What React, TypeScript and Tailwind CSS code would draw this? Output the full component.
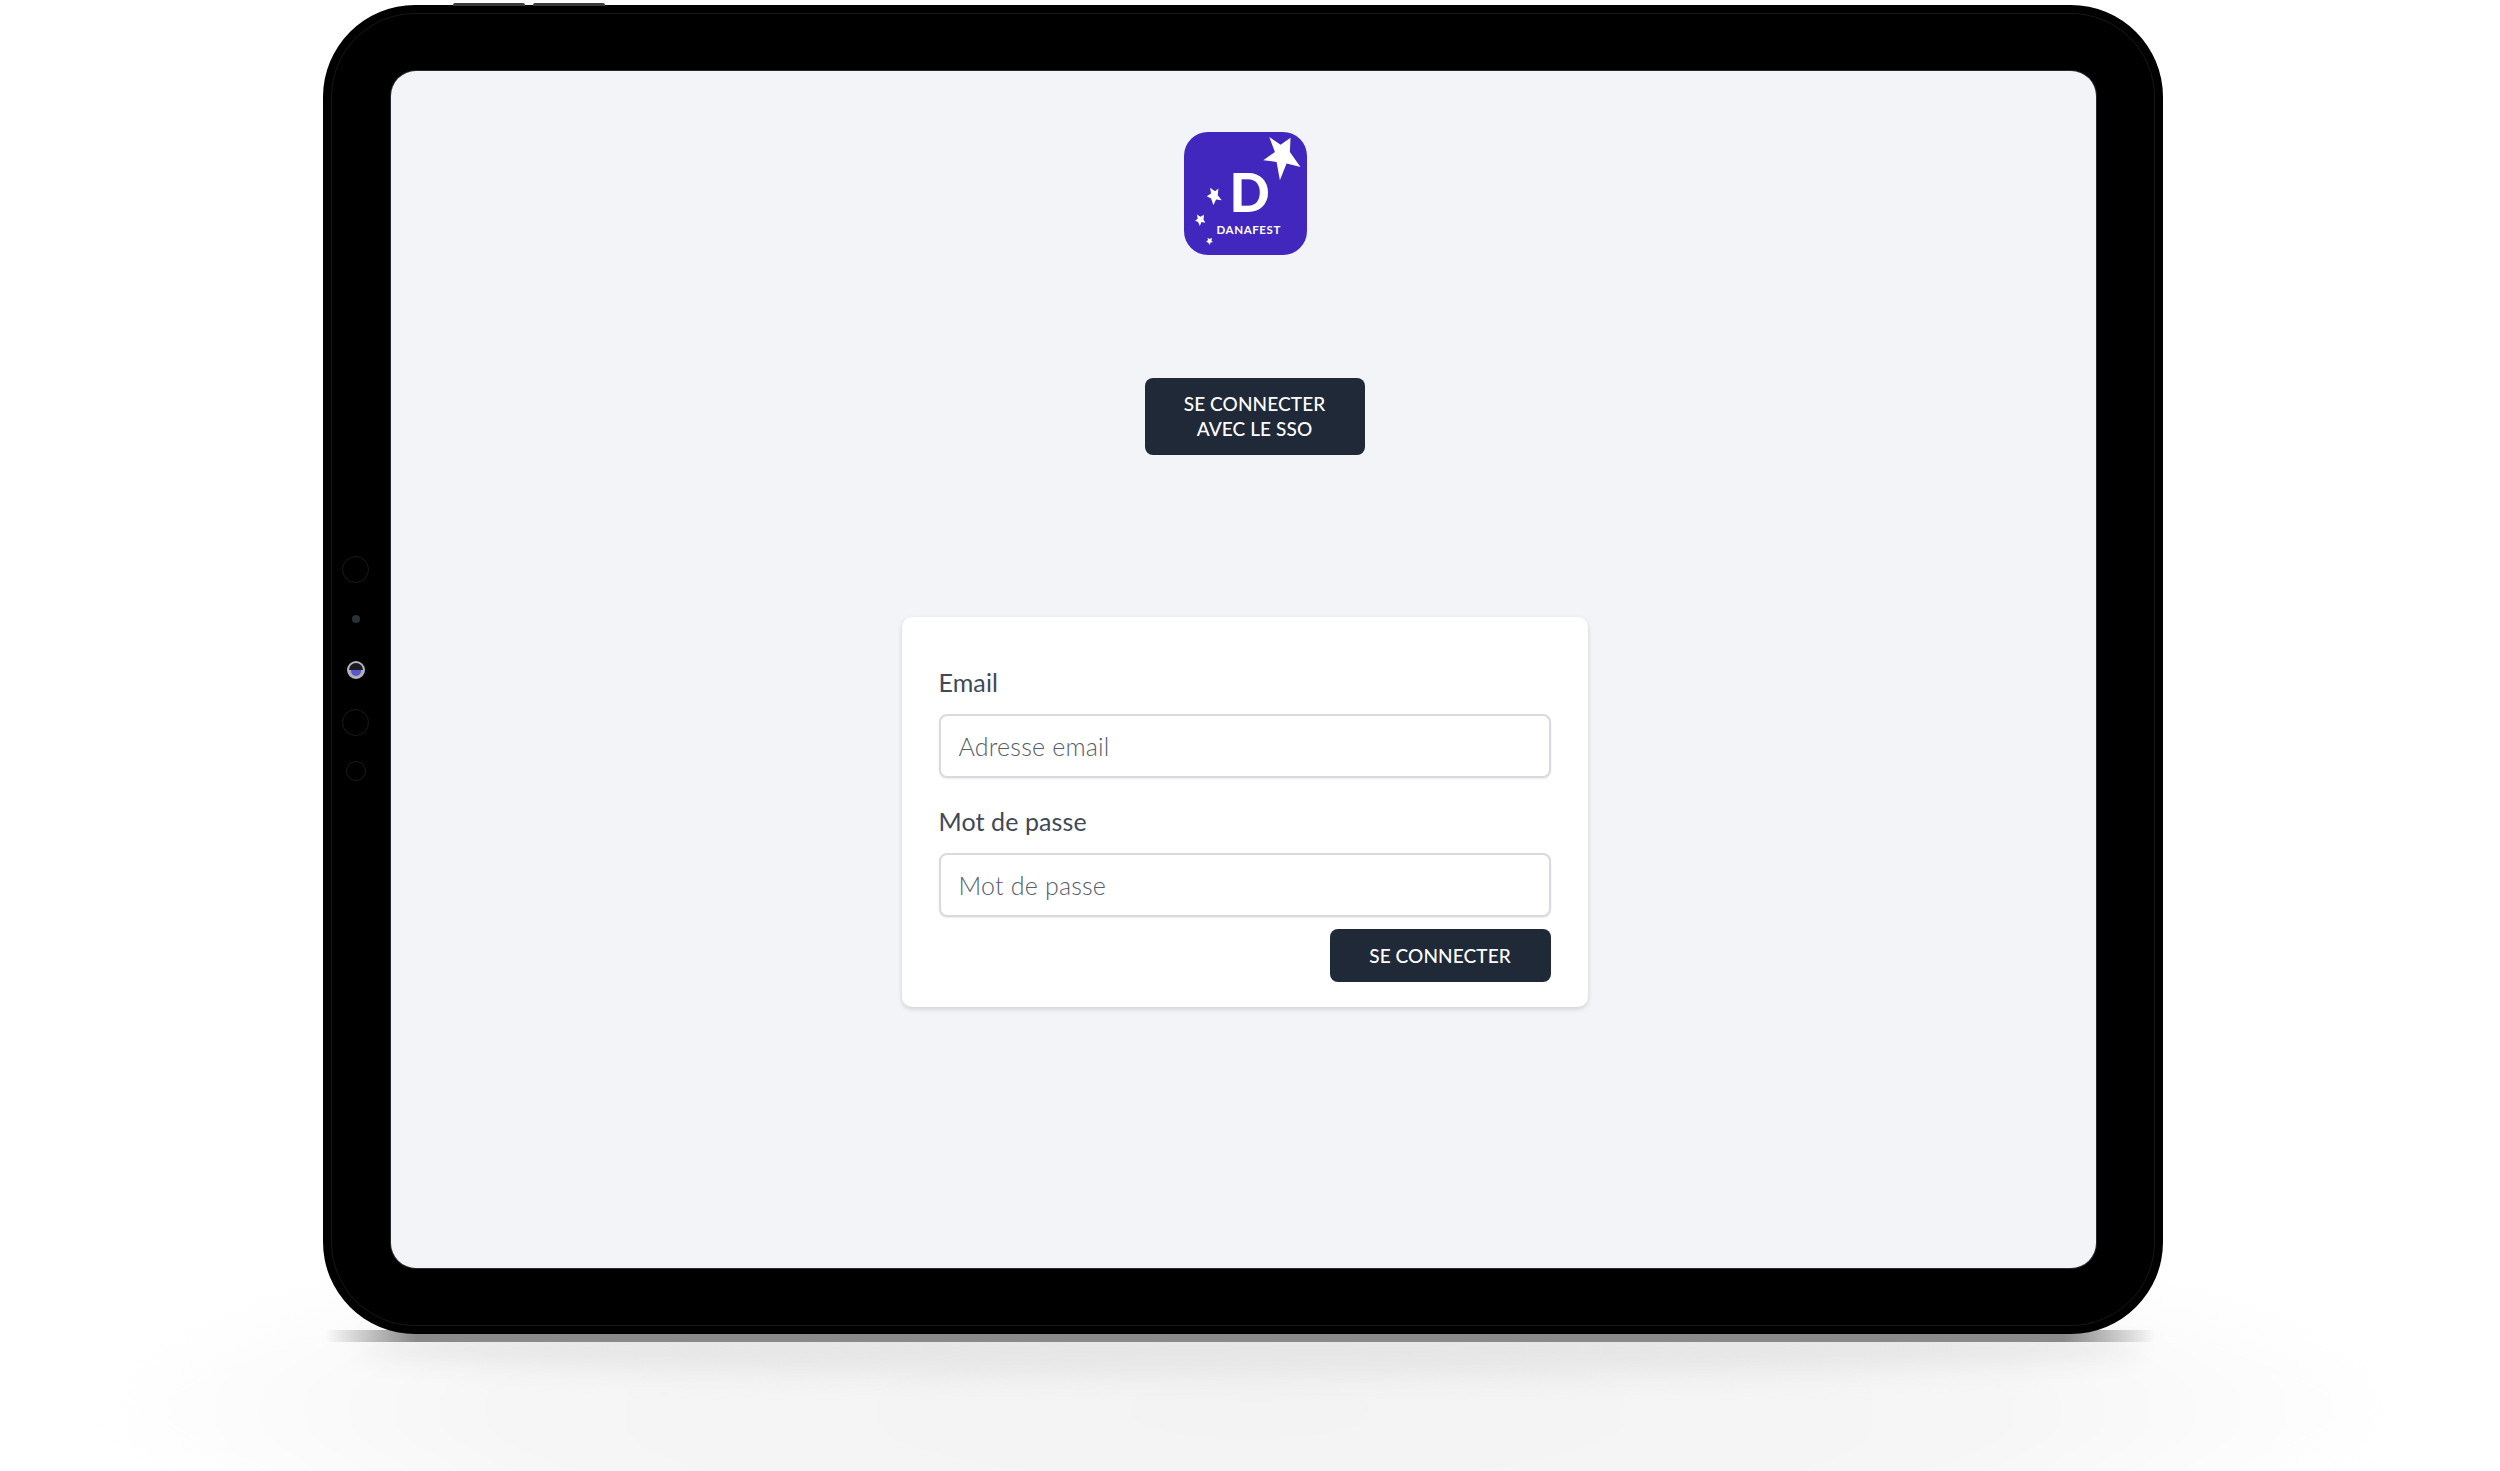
const fontStack = { fontFamily: '"Lato", "Open Sans", sans-serif' };

function Logo() {
  return (
    <div className="relative w-[123px] h-[123px] rounded-[24px] bg-[#4127bd] text-white overflow-hidden">
      <svg viewBox="103 65 367 370" className="absolute inset-0 w-full h-full" fill="#fff">
        <polygon points="358,80 392,103 422,82 420,125 452,170 410,160 390,210 380,155 340,150 375,125" />
        <polygon points="180,233 195,243 205,235 203,255 215,270 198,268 190,285 183,265 170,258 183,250" />
        <polygon points="140,313 151,320 162,314 160,328 166,338 154,336 149,348 144,336 135,332 143,325" />
        <polygon points="172,383 179,387 186,383 184,392 189,397 182,397 178,405 175,398 168,395 174,390" />
      </svg>
      <span className="absolute left-[46px] top-[25px] text-[53px] leading-[70px] font-black">D</span>
      <span className="absolute left-[33px] top-[91px] text-[11.5px] leading-[14px] font-bold tracking-[0.6px]">DANAFEST</span>
    </div>
  );
}

function Field({ label, placeholder, type }: { label: string; placeholder: string; type: string }) {
  return (
    <div className="flex flex-col">
      <label className="text-[25px] leading-[32px] tracking-[0.1px] text-[#414957] mb-[16px]">{label}</label>
      <input
        type={type}
        placeholder={placeholder}
        className="w-full h-[64px] px-[18px] bg-white border-2 border-[#d8dae0] rounded-[8px] text-[25px] font-light tracking-[0.2px] placeholder:text-[#565d6b] shadow-[0_1px_2px_rgba(0,0,0,0.08)] outline-none"
      />
    </div>
  );
}

function Camera() {
  return (
    <div className="absolute left-[19px] top-[551px] w-[27px] flex flex-col items-center">
      <div className="w-[27px] h-[27px] shrink-0 rounded-full border border-[#1b1b1d]" />
      <div className="w-[8px] h-[8px] shrink-0 rounded-full bg-[#2a3138] mt-[32px]" />
      <div className="relative w-[18px] h-[18px] shrink-0 rounded-full bg-[#a9a9c4] border-2 border-[#b4b4bf] mt-[38px] overflow-hidden">
        <div className="absolute inset-x-0 top-0 h-[7px] bg-[#1a1a22]" />
        <div className="absolute inset-x-[2px] bottom-[1px] h-[6px] rounded-b-full bg-[#5a55c8]" />
      </div>
      <div className="w-[27px] h-[27px] shrink-0 rounded-full border border-[#1b1b1d] mt-[30px]" />
      <div className="w-[20px] h-[20px] shrink-0 rounded-full border border-[#1b1b1d] mt-[25px]" />
    </div>
  );
}

export default function App() {
  return (
    <div className="relative w-[2500px] h-[1471px] bg-white overflow-hidden pt-[5px] pl-[323px]" style={fontStack}>
      {/* floor shadow under the tablet */}
      <div className="absolute left-[100px] top-[1200px] w-[2300px] h-[420px] rounded-[50%] bg-[radial-gradient(closest-side,#f3f3f3_0%,#f6f6f6_65%,#ffffff_100%)] blur-[20px]" />
      <div className="absolute left-[360px] top-[1320px] w-[1780px] h-[56px] rounded-[50%] bg-[#e6e6e6] blur-[12px]" />
      <div className="absolute left-[325px] top-[1330px] w-[1830px] h-[12px] rounded-b-[6px] bg-[linear-gradient(to_right,transparent_0%,#8a8a8a_5%,#8a8a8a_95%,transparent_100%)]" />

      <div className="relative w-[1840px] h-[1329px] rounded-[92px] bg-black pt-[66px] pl-[68px]">
        <div className="absolute inset-[8px] rounded-[84px] border border-[#17171a]" />
        <div className="absolute left-[130px] -top-[2px] w-[72px] h-[3px] rounded-t-[2px] bg-[#3a3a3a]" />
        <div className="absolute left-[210px] -top-[2px] w-[72px] h-[3px] rounded-t-[2px] bg-[#3a3a3a]" />
        <Camera />

        <div className="relative w-[1705px] h-[1197px] rounded-[25px] bg-[#f3f4f8] shadow-[0_0_0_1px_#2a2a2e] flex flex-col items-center">
          <div className="mt-[61px] ml-[3px]">
            <Logo />
          </div>
          <button className="mt-[123px] ml-[22px] w-[220px] h-[77px] pb-[2px] rounded-[8px] bg-[#1f2937] text-white text-[19px] leading-[25px] font-medium tracking-[0.1px]">
            SE CONNECTER
            <br />
            AVEC LE SSO
          </button>
          <form className="mt-[162px] ml-[2px] w-[686px] h-[390px] rounded-[10px] bg-white px-[37px] pt-[49px] shadow-[0_2px_5px_rgba(0,0,0,0.15)] flex flex-col">
            <Field label="Email" placeholder="Adresse email" type="email" />
            <div className="mt-[27px]">
              <Field label="Mot de passe" placeholder="Mot de passe" type="password" />
            </div>
            <div className="mt-[12px] flex justify-end">
              <button type="button" className="w-[221px] h-[53px] pt-[1px] rounded-[8px] bg-[#1f2937] text-white text-[19px] font-medium tracking-[0.1px]">
                SE CONNECTER
              </button>
            </div>
          </form>
        </div>
      </div>
    </div>
  );
}
